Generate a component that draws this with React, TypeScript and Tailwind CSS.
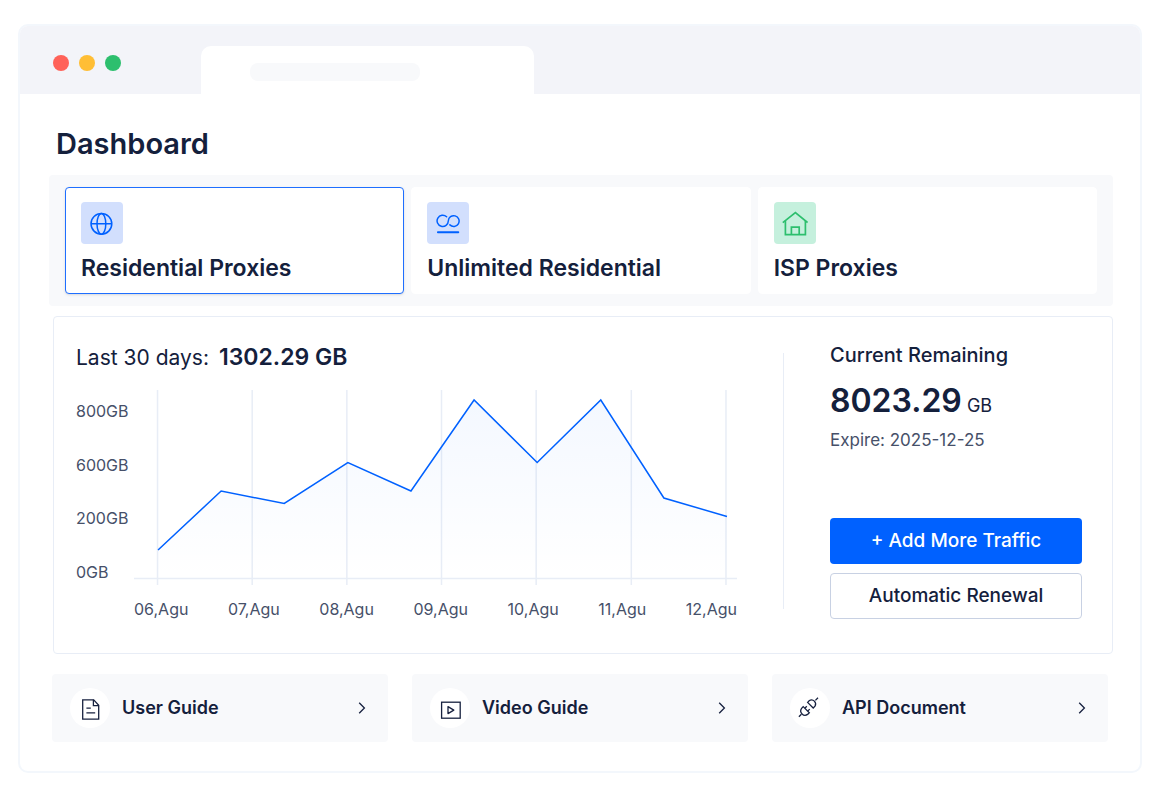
import { useState } from "react";
import type { ReactNode } from "react";

type ProxyTabProps = {
  label: string;
  icon: ReactNode;
  iconBg: string;
  selected: boolean;
  onSelect: () => void;
};

type GuideLinkProps = {
  label: string;
  icon: ReactNode;
};

const days = ["06,Agu", "07,Agu", "08,Agu", "09,Agu", "10,Agu", "11,Agu", "12,Agu"];
const volumes = ["800GB", "600GB", "200GB", "0GB"];
const gridX = [23.5, 118, 212.5, 307, 401.5, 496.5, 591];
const line =
  "24,160 87,101 150,113.5 213.5,72.5 276.5,101 339.5,10 402.5,72.5 466,10 529,108 592,126.5";

const GlobeIcon = () => (
  <svg width="24" height="24" viewBox="0 0 24 24" fill="none" stroke="#0061ff" strokeWidth="1.5">
    <circle cx="11.4" cy="12.8" r="10.4" />
    <ellipse cx="11.4" cy="12.8" rx="4.4" ry="10.4" />
    <path d="M1 12.8h20.8" />
  </svg>
);

const InfinityIcon = () => (
  <svg width="24" height="24" viewBox="0 0 24 24" fill="none" stroke="#0061ff" strokeWidth="1.5" strokeLinecap="round">
    <path d="M10.6 5.8A5.6 5.6 0 1 0 12.3 9.9 5.4 5.4 0 1 1 13.9 13.9" />
    <path d="M1.9 21.2h20.4" strokeWidth="1.9" />
  </svg>
);

const HouseIcon = () => (
  <svg width="26" height="26" viewBox="0 0 26 26" fill="none" stroke="#2dbf6e" strokeWidth="1.7">
    <path d="M.8 12.6 13.4 2.6l12.2 10" />
    <path d="M3.4 10.8v13.8h20V10.8" />
    <path d="M9.4 24.6v-7.4h7.8v7.4" />
  </svg>
);

const DocIcon = () => (
  <svg width="24" height="24" viewBox="0 0 24 24" fill="none" stroke="#17213f" strokeWidth="1.3">
    <path d="M4.7 3.8h11l5 5.4v14h-16z" />
    <path d="M15.4 3.8v5.8h5.3" />
    <path d="M8.4 12.2h4.4M8.4 16.8h8.8" />
  </svg>
);

const VideoIcon = () => (
  <svg width="24" height="24" viewBox="0 0 24 24" fill="none" stroke="#17213f" strokeWidth="1.3">
    <rect x="3.6" y="6.2" width="18.6" height="16" />
    <path d="M10 10.6v7l5.8-3.5z" strokeLinejoin="round" />
  </svg>
);

const PlugIcon = () => (
  <svg width="24" height="24" viewBox="0 0 24 24" fill="none" stroke="#17213f" strokeWidth="1.3">
    <path d="M9.6 6.4l5.6 5.6 1.8-1.9a4.1 4.1 0 0 0-5.6-5.6z" />
    <path d="M17.4 4.4 20 1.8M.9 20.8l2.5-2.6" />
    <path d="M5.2 10.6l6.1 6.1-1.7 1.7a4.3 4.3 0 0 1-6-6z" />
    <path d="M6.8 12.2l2-2M9.7 15.1l2-2" />
  </svg>
);

const ProxyTab = ({ label, icon, iconBg, selected, onSelect }: ProxyTabProps) => (
  <button
    type="button"
    aria-pressed={selected}
    onClick={onSelect}
    className={`flex flex-1 flex-col items-start rounded border bg-white px-[15px] pt-[14px] pb-[11px] text-left ${
      selected ? "border-[#1f6fff] shadow-sm" : "border-white"
    }`}
  >
    <span className={`flex h-[42px] w-[42px] items-center justify-center rounded ${iconBg}`}>
      {icon}
    </span>
    <span className="mt-[10px] text-[23px] leading-7 font-semibold">{label}</span>
  </button>
);

const UsageChart = () => (
  <div className="mt-4 flex">
    <div className="flex h-[196px] w-[58px] flex-col justify-between pt-[9px] pb-[2px] text-base leading-6 text-[#465069]">
      {volumes.map((volume) => (
        <span key={volume}>{volume}</span>
      ))}
    </div>
    <div className="flex-1">
      <svg className="block h-[196px] w-full" viewBox="0 0 602 196" preserveAspectRatio="none" fill="none">
        <defs>
          <linearGradient id="area" x1="0" y1="0" x2="0" y2="1">
            <stop offset="0" stopColor="#0061ff" stopOpacity="0.045" />
            <stop offset="1" stopColor="#0061ff" stopOpacity="0" />
          </linearGradient>
        </defs>
        <g stroke="#e8edf6" strokeWidth="1.5">
          {gridX.map((x) => (
            <path key={x} d={`M${x} 0V195`} />
          ))}
          <path d="M0 188.5H602" />
        </g>
        <polygon points={`${line} 592,188 24,188`} fill="url(#area)" />
        <polyline points={line} stroke="#0061ff" strokeWidth="1.5" />
      </svg>
      <div className="mt-[11px] flex justify-between text-base leading-6 text-[#465069]">
        {days.map((day) => (
          <span key={day}>{day}</span>
        ))}
      </div>
    </div>
  </div>
);

const GuideLink = ({ label, icon }: GuideLinkProps) => (
  <a href="#" className="flex h-[68px] flex-1 items-center gap-3 rounded bg-[#f8f9fb] pr-[22px] pl-[18px]">
    <span className="flex h-10 w-10 items-center justify-center rounded-full bg-white">{icon}</span>
    <span className="flex-1 text-lg font-semibold">{label}</span>
    <svg width="8" height="12" viewBox="0 0 8 12" fill="none" stroke="#17213f" strokeWidth="1.3">
      <path d="M1.2.8 6.4 6l-5.2 5.2" />
    </svg>
  </a>
);

const tabs = [
  { label: "Residential Proxies", icon: <GlobeIcon />, iconBg: "bg-[#d2dffd]" },
  { label: "Unlimited Residential", icon: <InfinityIcon />, iconBg: "bg-[#d2dffd]" },
  { label: "ISP Proxies", icon: <HouseIcon />, iconBg: "bg-[#c5f0dd]" },
];

const App = () => {
  const [selectedTab, setSelectedTab] = useState(tabs[0].label);

  return (
    <div className="min-h-screen bg-white px-[18px] py-6 font-['Inter',sans-serif] text-[#14203c]">
      <div className="overflow-hidden rounded-[10px] border-2 border-[#f3f7fc]">
        <header className="flex h-[68px] items-end bg-[#f3f4f9]">
          <div className="flex w-[181px] gap-[10px] self-center pl-[33px]">
            <span className="mt-[5px] h-4 w-4 rounded-full bg-[#ff6259]" />
            <span className="mt-[5px] h-4 w-4 rounded-full bg-[#ffbe35]" />
            <span className="mt-[5px] h-4 w-4 rounded-full bg-[#2dbf6e]" />
          </div>
          <div className="h-12 w-[333px] rounded-t-[10px] bg-white pt-[17px] pl-[49px]">
            <div className="h-[18px] w-[170px] rounded-lg bg-[#f8f9fb]" />
          </div>
        </header>
        <main className="pt-8 pr-[27px] pb-[29px] pl-[29px]">
          <h1 className="pl-[7px] text-[29px] leading-9 font-semibold">Dashboard</h1>

          <div className="mt-[13px] flex gap-[7px] rounded bg-[#f8f9fb] px-4 py-3">
            {tabs.map((tab) => (
              <ProxyTab
                key={tab.label}
                {...tab}
                selected={selectedTab === tab.label}
                onSelect={() => setSelectedTab(tab.label)}
              />
            ))}
          </div>

          <section className="mt-[10px] ml-1 flex rounded border border-[#e8edf6] pt-6 pr-[30px] pb-8 pl-[22px]">
            <div className="flex-1">
              <p className="flex items-baseline gap-[10px] text-[21px] leading-8">
                Last 30 days:
                <strong className="text-[23px] font-semibold">1302.29 GB</strong>
              </p>
              <UsageChart />
            </div>
            <div className="mx-[46px] my-3 w-px bg-[#e8edf6]" />
            <div className="flex w-[252px] flex-col pb-[2px]">
              <h2 className="text-xl leading-7 font-medium">Current Remaining</h2>
              <p className="mt-3 text-lg leading-10">
                <strong className="text-[32px] font-semibold">8023.29</strong> GB
              </p>
              <p className="mt-[2px] text-[17px] leading-6 text-[#465069]">Expire: 2025-12-25</p>
              <button type="button" className="mt-auto h-[46px] rounded bg-[#0061ff] text-[19px] font-medium text-white">
                + Add More Traffic
              </button>
              <button type="button" className="mt-[9px] h-[46px] rounded border border-[#c8d1e3] text-[19px] font-medium">
                Automatic Renewal
              </button>
            </div>
          </section>

          <nav className="mt-5 mr-[5px] ml-[3px] flex gap-6">
            <GuideLink label="User Guide" icon={<DocIcon />} />
            <GuideLink label="Video Guide" icon={<VideoIcon />} />
            <GuideLink label="API Document" icon={<PlugIcon />} />
          </nav>
        </main>
      </div>
    </div>
  );
};

export default App;
